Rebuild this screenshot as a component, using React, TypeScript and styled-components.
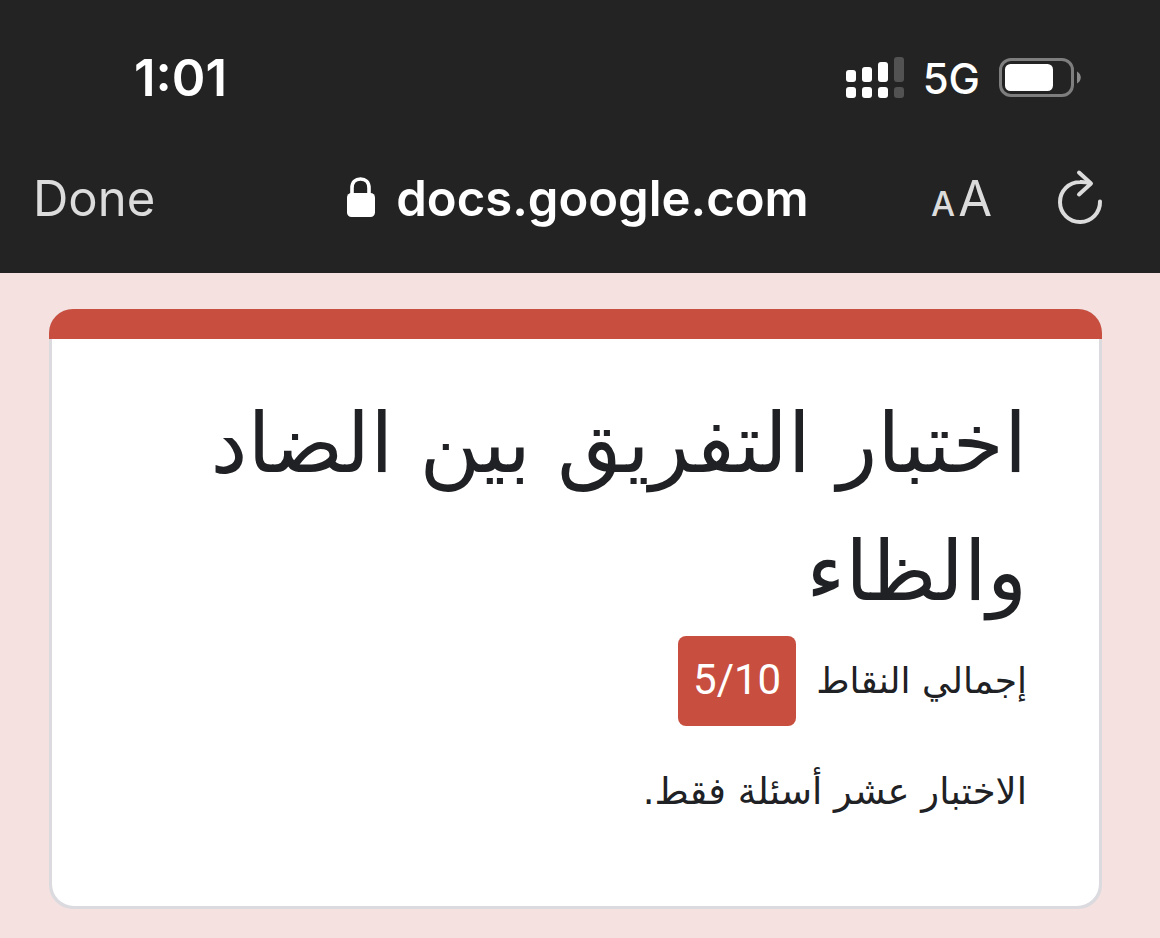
import React from 'react';
import styled, { createGlobalStyle } from 'styled-components';

const GlobalStyle = createGlobalStyle`
  * { box-sizing: border-box; }
  body {
    margin: 0;
    background: #f5e2e0;
    font-family: Inter, "Liberation Sans", sans-serif;
  }
`;

const Page = styled.div`
  min-height: 100vh;
  background: #f5e2e0;
`;

const Header = styled.header`
  background: #232323;
  color: #fff;
  padding-bottom: 31px;
`;

const StatusBar = styled.div`
  display: flex;
  align-items: center;
  justify-content: space-between;
  height: 156px;
  padding: 0 79px 0 134px;
`;

const Time = styled.time`
  font-size: 51px;
  line-height: 60px;
  font-weight: 600;
`;

const Indicators = styled.div`
  display: flex;
  align-items: center;
  gap: 19px;
`;

const Network = styled.span`
  padding-top: 2px;
  font-size: 42px;
  line-height: 48px;
  font-weight: 500;
`;

const NavBar = styled.nav`
  display: grid;
  grid-template-columns: 1fr auto 1fr;
  align-items: center;
  height: 86px;
  padding: 0 38px 0 33px;
`;

const NavButton = styled.button`
  display: flex;
  align-items: baseline;
  gap: 3px;
  padding: 0;
  border: 0;
  background: none;
  color: #dcdcdc;
  font: inherit;
  font-size: 49px;
  line-height: 60px;
  cursor: pointer;
`;

const Address = styled.div`
  display: flex;
  align-items: center;
  gap: 20px;
  font-size: 49px;
  line-height: 60px;
  font-weight: 600;
`;

const Actions = styled.div`
  display: flex;
  align-items: center;
  justify-content: flex-end;
  gap: 65px;
  padding-right: 19px;
`;

const Letter = styled.span<{ $small?: boolean }>`
  font-size: ${(p) => (p.$small ? 34 : 49)}px;
  line-height: ${(p) => (p.$small ? 40 : 60)}px;
  font-weight: ${(p) => (p.$small ? 500 : 400)};
`;

const Main = styled.main`
  padding: 36px 58px 30px 49px;
`;

const Card = styled.section`
  overflow: hidden;
  border-radius: 24px;
  background: #dadadf;
`;

const Accent = styled.div`
  height: 30px;
  background: #c84f40;
`;

const CardBody = styled.div`
  margin: 0 3px 3px;
  padding: 41px 72px 84px;
  border-radius: 0 0 22px 22px;
  background: #fff;
  color: #202124;
  font-family: Roboto, "DejaVu Sans", sans-serif;
`;

const Title = styled.h1`
  margin: 0;
  font-family: "DejaVu Sans", sans-serif;
  font-size: 83px;
  line-height: 128px;
  font-weight: 400;
`;

const Score = styled.div`
  display: flex;
  align-items: center;
  gap: 20px;
`;

const Label = styled.p`
  margin: 0;
  font-family: "DejaVu Sans", sans-serif;
  font-size: 36px;
  line-height: 60px;
`;

const Points = styled.span`
  padding: 14px 15px 16px;
  border-radius: 8px;
  background: #c84f40;
  color: #fff;
  font-size: 42px;
  line-height: 60px;
`;

const Description = styled(Label)`
  margin-top: 36px;
  font-size: 37px;
`;

const Signal = () => (
  <svg width="58" height="42" viewBox="0 0 58 42" fill="#fff" aria-label="Signal">
    <rect x="0" y="13" width="10" height="12" rx="3" />
    <rect x="16" y="10" width="10" height="15" rx="3" />
    <rect x="32" y="5" width="10" height="20" rx="3" />
    <rect x="48" y="0" width="10" height="25" rx="3" fill="#525252" />
    <rect x="0" y="30" width="10" height="11" rx="3" />
    <rect x="16" y="30" width="10" height="11" rx="3" />
    <rect x="32" y="30" width="10" height="11" rx="3" />
    <rect x="48" y="30" width="10" height="11" rx="3" fill="#525252" />
  </svg>
);

const Battery = () => (
  <svg width="82" height="40" viewBox="0 0 82 40" aria-label="Battery">
    <rect x="1.5" y="1.5" width="72" height="36" rx="10.5" fill="none" stroke="#7e7e7e" strokeWidth="3" />
    <rect x="6" y="6" width="48" height="27" rx="5.5" fill="#fff" />
    <path d="M78 13.5C83 16 83 23 78 25.5Z" fill="#8b8b8b" />
  </svg>
);

const Lock = () => (
  <svg width="30" height="44" viewBox="0 0 30 44" aria-hidden="true">
    <path d="M6 18V11C6 5 9.5 2 14.5 2S23 5 23 11V18" fill="none" stroke="#fff" strokeWidth="3.6" />
    <rect x="1" y="16" width="28" height="24" rx="4.5" fill="#fff" />
  </svg>
);

const ReloadIcon = styled.svg`
  display: block;
`;

const Reload = () => (
  <ReloadIcon width="46" height="60" viewBox="0 0 46 60" fill="none" stroke="#dcdcdc" strokeWidth="4" strokeLinecap="round" strokeLinejoin="round" aria-hidden="true">
    <path d="M43 32.500A20 20 0 1 1 23 13Q29 12.800 33 14.500" />
    <path d="M22 3.500L34 14.500L22 25.500" />
  </ReloadIcon>
);

export default function App() {
  return (
    <Page>
      <GlobalStyle />
      <Header>
        <StatusBar>
          <Time>1:01</Time>
          <Indicators>
            <Signal />
            <Network>5G</Network>
            <Battery />
          </Indicators>
        </StatusBar>
        <NavBar>
          <NavButton type="button">Done</NavButton>
          <Address>
            <Lock />
            <span>docs.google.com</span>
          </Address>
          <Actions>
            <NavButton type="button" aria-label="Text size">
              <Letter $small>A</Letter>
              <Letter>A</Letter>
            </NavButton>
            <NavButton type="button" aria-label="Reload">
              <Reload />
            </NavButton>
          </Actions>
        </NavBar>
      </Header>
      <Main dir="rtl" lang="ar">
        <Card>
          <Accent />
          <CardBody>
            <Title>اختبار التفريق بين الضاد والظاء</Title>
            <Score>
              <Label>إجمالي النقاط</Label>
              <Points dir="ltr">5/10</Points>
            </Score>
            <Description>الاختبار عشر أسئلة فقط.</Description>
          </CardBody>
        </Card>
      </Main>
    </Page>
  );
}
